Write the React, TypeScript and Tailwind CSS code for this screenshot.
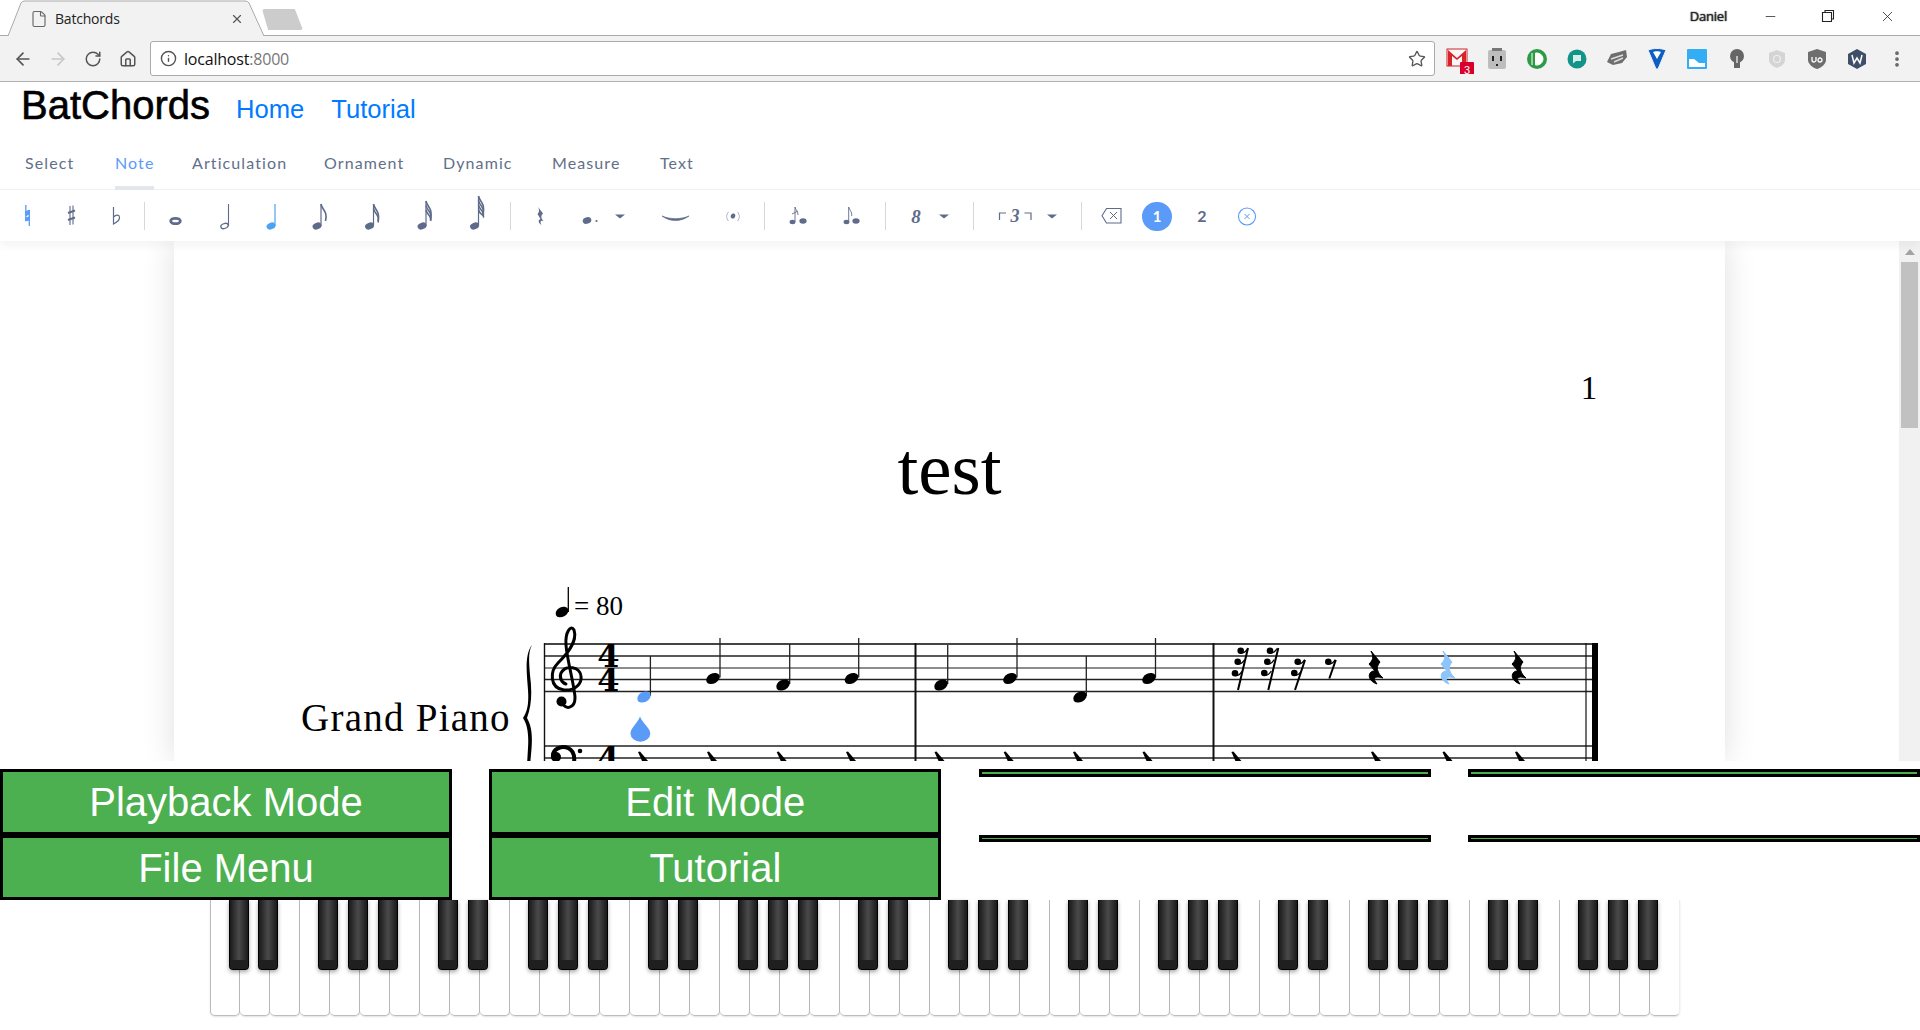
import type { ReactNode } from 'react';
import { ArrowLeft, ArrowRight, RotateCw, Home, Info, Star, X, Minus, EllipsisVertical, File } from 'lucide-react';

const INK = '#5f6b8a';
const BLUE = '#5a9bf8';

// every tool is drawn in page coordinates, the viewBox just cuts out its slot
const Tool = ({ x, w, children }: { x: number; w: number; children: ReactNode }) => (
  <svg width={w} height={51} viewBox={`${x} 190 ${w} 51`} className="shrink-0">
    {children}
  </svg>
);

const Sep = () => <div className="w-px h-[28px] bg-[#d5d8de] shrink-0" />;

const Caret = ({ cx }: { cx: number }) => <path d={`M${cx - 5} 214.5h10l-5 4z`} fill={INK} />;

const ToolNote = ({ x, top, flags = 0, color = INK }: { x: number; top: number; flags?: number; color?: string }) => (
  <g>
    <ellipse cx={x - 4} cy={226} rx={4.6} ry={3.3} transform={`rotate(-20 ${x - 4} 226)`} fill={color} />
    <line x1={x} y1={top} x2={x} y2={226} stroke={color} strokeWidth={1.2} />
    {Array.from({ length: flags }).map((_, i) => (
      <path
        key={i}
        d={`M${x} ${top + i * 4.5} C${x + 1} ${top + 6 + i * 4.5} ${x + 7} ${top + 7 + i * 4} ${x + 4.5} ${top + 17 + i * 1.5}`}
        fill="none"
        stroke={color}
        strokeWidth={1.6}
      />
    ))}
  </g>
);

const NoteTools = () => (
  <div className="flex items-center h-[51px] bg-white relative z-10 shadow-[0_4px_10px_rgba(0,0,0,0.05)]">
    <Tool x={0} w={49}>
      <path d="M25.8 205v16M29.3 210v16" stroke={BLUE} strokeWidth={1.3} />
      <path d="M25.8 211.5l3.5-1.2v4l-3.5 1.2zM25.8 218l3.5-1.2v3l-3.5 1.2z" fill={BLUE} stroke={BLUE} />
    </Tool>
    <Tool x={49} w={45}>
      <path d="M70 206v19M73 205.500v19" stroke={INK} strokeWidth={1.1} />
      <path d="M68 213l7-2.500M68 220l7-2.500" stroke={INK} strokeWidth={2} />
    </Tool>
    <Tool x={94} w={50}>
      <path d="M113.500 207v17c4-2 6.500-4 6-7-.4-2.500-3.500-2.500-6 0" fill="none" stroke={INK} strokeWidth={1.2} />
    </Tool>
    <Sep />
    <Tool x={145} w={57}>
      <ellipse cx={175.500} cy={221} rx={4.800} ry={2.700} fill="none" stroke={INK} strokeWidth={2.800} />
    </Tool>
    <Tool x={202} w={46}>
      <ellipse cx={224.500} cy={226} rx={3.800} ry={2.400} transform="rotate(-20 224.500 226)" fill="none" stroke={INK} strokeWidth={1.300} />
      <line x1={228.500} y1={204} x2={228.500} y2={226} stroke={INK} strokeWidth={1.100} />
    </Tool>
    <Tool x={248} w={46}>
      <ToolNote x={275} top={204} color="#4aa3f5" />
    </Tool>
    <Tool x={294} w={50}>
      <ToolNote x={321} top={204} flags={1} />
    </Tool>
    <Tool x={344} w={56}>
      <ToolNote x={373.500} top={204} flags={2} />
    </Tool>
    <Tool x={400} w={48}>
      <ToolNote x={426} top={201} flags={3} />
    </Tool>
    <Tool x={448} w={62}>
      <ToolNote x={478.500} top={196} flags={4} />
    </Tool>
    <Sep />
    <Tool x={511} w={58}>
      <path d="M538 207l5 6.500c-2 2-2.500 4 .5 7.500-2.500-.7-4 .5-2 4-3-1.500-4-5-1-6l-3-5c2-2 2-4 .5-7z" fill={INK} />
    </Tool>
    <Tool x={569} w={71}>
      <ellipse cx={587} cy={220.500} rx={4.400} ry={3.300} transform="rotate(-20 587 220.500)" fill={INK} />
      <circle cx={596.500} cy={221} r={1.100} fill={INK} />
      <Caret cx={620} />
    </Tool>
    <Tool x={640} w={70}>
      <path d="M662 216c8 6 19 6 27 0-8 3.500-19 3.500-27 0z" fill={INK} stroke={INK} strokeWidth={0.7} />
    </Tool>
    <Tool x={710} w={54}>
      <ellipse cx={733} cy={216} rx={2.200} ry={2.600} transform="rotate(20 733 216)" fill={INK} />
      <path d="M728.500 212c-2.500 3-2.500 6 0 9M737.500 212c2.500 3 2.500 6 0 9" fill="none" stroke="#a9b0c2" strokeWidth={1} />
    </Tool>
    <Sep />
    <Tool x={765} w={66}>
      <ellipse cx={792.500} cy={222} rx={2.900} ry={2.200} fill={INK} />
      <ellipse cx={803} cy={221} rx={3.600} ry={2.800} fill={INK} />
      <path d="M795 222v-15c.5 3 3 4 3 8M792 214l6-3" fill="none" stroke={INK} strokeWidth={0.9} />
    </Tool>
    <Tool x={831} w={54}>
      <ellipse cx={846.500} cy={222} rx={2.900} ry={2.200} fill={INK} />
      <ellipse cx={856} cy={221} rx={3.600} ry={2.800} fill={INK} />
      <path d="M848.700 222v-15c.5 3 3.500 4 3 9" fill="none" stroke={INK} strokeWidth={0.9} />
    </Tool>
    <Sep />
    <Tool x={886} w={87}>
      <text x={916} y={223} textAnchor="middle" fontFamily="Liberation Serif, serif" fontSize={19} fontWeight={700} fontStyle="italic" fill={INK}>
        8
      </text>
      <Caret cx={944} />
    </Tool>
    <Sep />
    <Tool x={974} w={107}>
      <path d="M999.500 220v-7h6.500M1031 220v-7h-6.500" fill="none" stroke={INK} strokeWidth={1.200} />
      <text x={1015} y={222} textAnchor="middle" fontFamily="Liberation Serif, serif" fontSize={18} fontWeight={700} fontStyle="italic" fill={INK}>
        3
      </text>
      <Caret cx={1052} />
    </Tool>
    <Sep />
    <Tool x={1082} w={60}>
      <path d="M1106.500 208.500h14.500v14.500h-14.500l-4.500-7.200z" fill="none" stroke={INK} strokeWidth={1.100} />
      <path d="M1110 212l7 7M1117 212l-7 7" stroke={INK} strokeWidth={1} />
    </Tool>
    <button className="w-[30px] h-[29px] mt-[2px] shrink-0 rounded-full bg-[#5a9bf8] text-white text-[15px] font-bold flex items-center justify-center font-['Lato',sans-serif]">
      1
    </button>
    <button className="w-[60px] shrink-0 text-[#5f6b8a] text-[16px] font-bold text-center font-['Lato',sans-serif]">2</button>
    <Tool x={1232} w={30}>
      <circle cx={1247} cy={216.500} r={8.500} fill="none" stroke={BLUE} strokeWidth={1.100} />
      <path d="M1244.500 214l5 5M1249.500 214l-5 5" stroke={BLUE} strokeWidth={1} />
    </Tool>
  </div>
);

const ScoreNote = ({ hx, hy, sx, top, color = '#000' }: { hx: number; hy: number; sx: number; top: number; color?: string }) => (
  <g>
    <line x1={sx} y1={top} x2={sx} y2={hy - 1} stroke="#222" strokeWidth={1.300} />
    <ellipse cx={hx} cy={hy} rx={7.200} ry={5} transform={`rotate(-28 ${hx} ${hy})`} fill={color} />
  </g>
);

const Rest = ({ x, color = '#000' }: { x: number; color?: string }) => (
  <path
    transform={`translate(${x} 0)`}
    d="M-4 651L5 662C2 666 1 669 5 675L8 678C2 676-2 677 0 681L2 684C-7 681-8 673-2 671L0 671L-6 664C-2 660-1 657-4 651Z"
    fill={color}
    stroke={color}
    strokeWidth={1}
  />
);

const SmallRest = ({ x, blobs }: { x: number; blobs: number[][] }) => (
  <g>
    <line x1={x} y1={blobs.length === 1 ? 678.500 : 690} x2={x + (blobs.length === 1 ? 6.500 : 10)} y2={blobs.length === 3 ? 648 : 660} stroke="#000" strokeWidth={2} />
    {blobs.map(([bx, by], i) => (
      <g key={i}>
        <circle cx={bx} cy={by} r={3.300} fill="#000" />
        <path d={`M${bx} ${by + 2}C${bx + 3} ${by + 3} ${bx + 5} ${by + 1} ${bx + 7} ${by - 2}`} fill="none" stroke="#000" strokeWidth={1.300} />
      </g>
    ))}
  </g>
);

const Score = () => (
  <svg width={1551} height={520} viewBox="174 241 1551 520" className="block">
    <text x={1589} y={399} textAnchor="middle" fontFamily="Liberation Serif, serif" fontSize={33} fill="#000">
      1
    </text>
    <text x={949.500} y={494} textAnchor="middle" fontFamily="Liberation Serif, serif" fontSize={75} fill="#000">
      test
    </text>
    <text x={301} y={731} fontFamily="Liberation Serif, serif" fontSize={39} letterSpacing={1.250} fill="#000">
      Grand Piano
    </text>

    {/* tempo */}
    <line x1={568.300} y1={587} x2={568.300} y2={612} stroke="#000" strokeWidth={1.300} />
    <ellipse cx={562} cy={612} rx={6.800} ry={4.800} transform="rotate(-28 562 612)" fill="#000" />
    <text x={574} y={615} fontFamily="Liberation Serif, serif" fontSize={27} fill="#000">
      = 80
    </text>

    {/* staves */}
    {[644, 656, 668, 679.500, 691.500, 746, 758].map((y, i) => (
      <line key={y} x1={544} y1={y} x2={1598} y2={y} stroke={i === 0 ? '#444' : i === 2 ? '#666' : '#222'} strokeWidth={i === 0 ? 2 : 1.300} />
    ))}
    {[544.500, 915.500, 1213.500, 1586].map((x, i) => (
      <line key={x} x1={x} y1={643} x2={x} y2={761} stroke="#111" strokeWidth={i === 0 ? 1.400 : i === 3 ? 1.200 : 2} />
    ))}
    <rect x={1592} y={643} width={6} height={118} fill="#000" />

    {/* brace */}
    <path d="M532 645C524 655 527 675 528 690C529 705 527 712 523 718C527 724 529 733 528 748L527 765L530 765C532 745 534 730 527 718C532 705 532 690 530 675C529 662 528 652 532 645Z" fill="#000" />

    {/* treble clef */}
    <path
      d="M562 702C565 711 575 708 575 698C575 688 567 660 566 645C565 632 571 624 574 630C578 642 566 655 558 663C550 671 549 688 564 690C576 691 582 683 581 676C580 667 566 664 561 673C559 678 562 683 566 684"
      fill="none"
      stroke="#000"
      strokeWidth={3}
      strokeLinecap="round"
    />
    <circle cx={561.500} cy={701.500} r={5} fill="#000" />

    {/* bass clef */}
    <circle cx={556} cy={757} r={5} fill="#000" />
    <path d="M553 757C552 749 562 745 568 748C575 751 575 760 573 768" fill="none" stroke="#000" strokeWidth={4} />
    <circle cx={580} cy={751} r={2.300} fill="#000" />

    {/* time signatures */}
    {[667, 691, 769].map((y) => (
      <text key={y} x={608.500} y={y} textAnchor="middle" fontFamily="DejaVu Serif, serif" fontWeight={700} fontSize={32} fill="#000">
        4
      </text>
    ))}

    {/* measure 1 and 2 */}
    <ScoreNote hx={644} hy={697} sx={650.400} top={656} color={BLUE} />
    <ScoreNote hx={713} hy={678.500} sx={720} top={638} />
    <ScoreNote hx={783} hy={685} sx={789.700} top={644} />
    <ScoreNote hx={851.500} hy={678.500} sx={858.700} top={638} />
    <ScoreNote hx={941} hy={685} sx={947.700} top={645} />
    <ScoreNote hx={1010} hy={678.500} sx={1017} top={638} />
    <ScoreNote hx={1080} hy={697} sx={1086.300} top={656} />
    <ScoreNote hx={1149} hy={678.500} sx={1155.500} top={638} />
    <path d="M640 716.500C637 724 630.500 728 630.500 733.500A9.900 8.200 0 0 0 650.300 733.500C650.300 728 643 724 640 716.500Z" fill={BLUE} />

    {/* measure 3 rests */}
    <SmallRest x={1238} blobs={[[1240.700, 650.700], [1237.700, 661.700], [1235, 673.300]]} />
    <SmallRest x={1268.300} blobs={[[1270, 650.700], [1267.300, 661.700], [1264.300, 673]]} />
    <SmallRest x={1295} blobs={[[1297.700, 661.700], [1294.300, 673]]} />
    <SmallRest x={1329.300} blobs={[[1328.300, 661.700]]} />
    <Rest x={1375} />
    <Rest x={1447} color="#8cc4fb" />
    <Rest x={1518} />

    {/* bass rests, the staff is cut by the panel below */}
    {[640, 709, 778.700, 848, 936.500, 1005.700, 1075, 1144.500, 1233.400, 1373, 1444.500, 1517].map((x) => (
      <path key={x} d={`M${x - 2} 752L${x} 751.500L${x + 8} 761L${x + 2} 761Z`} fill="#000" />
    ))}
  </svg>
);

const BLACK_KEYS = [0, 1, 3, 4, 5];

const Piano = () => (
  <div className="flex pl-[210px]">
    {Array.from({ length: 49 }).map((_, i) => (
      <div
        key={i}
        className="relative w-[30px] h-[116px] bg-white box-border border-r border-b border-[#bdbdbd] first:border-l last:border-r-[#eeeeee] rounded-b-[5px] shadow-[0_1px_2px_rgba(0,0,0,0.12)]"
      >
        {BLACK_KEYS.includes(i % 7) && (
          <div className="absolute z-10 left-[18px] top-0 w-5 h-[70px] box-border border border-black border-t-0 rounded-b-[4px] bg-[linear-gradient(90deg,#1a1a1a,#4a4a4a_50%,#1a1a1a)] shadow-[0_2px_4px_rgba(0,0,0,0.35)] flex flex-col justify-end overflow-hidden">
            <div className="h-[9px] bg-[#1f1f1f]" />
          </div>
        )}
      </div>
    ))}
  </div>
);

const BigButton = ({ label, h }: { label: string; h: string }) => (
  <button className={`${h} w-full box-border border-[3px] border-black bg-[#4CAF50] text-white text-[40px] font-['Liberation_Sans',sans-serif] flex items-center justify-center`}>
    {label}
  </button>
);

const Ext = ({ children }: { children: ReactNode }) => (
  <svg width={40} height={30} viewBox="-20 -15 40 30" className="shrink-0">
    {children}
  </svg>
);

const Extensions = () => (
  <div className="flex items-center pl-[3px] -ml-[1px]">
    <Ext>
      <rect x={-10} y={-10} width={20} height={17} fill="#f7f7f7" stroke="#d2252a" />
      <path d="M-9-9L0-1L9-9V7H5V-3L0 1L-5-3V7H-9Z" fill="#d9232a" />
      <rect x={3} y={3} width={14} height={14} rx={1} fill="#d8002a" />
      <text x={10} y={14.500} textAnchor="middle" fontSize={11} fill="#fff" fontFamily="Liberation Sans, sans-serif">3</text>
    </Ext>
    <Ext>
      <rect x={-9} y={-9} width={18} height={19} rx={2} fill="#bdbdbd" />
      <rect x={-5} y={-11} width={10} height={3} fill="#777" />
      <path d="M-4-3v5M4-3v5M-1 6h2" stroke="#222" strokeWidth={2} />
    </Ext>
    <Ext>
      <circle r={10} fill="#2f9a46" />
      <path d="M-5-6v12M-1.500-6h1.500a6 6 0 0 1 0 12h-1.500z" fill="#fff" stroke="#fff" />
    </Ext>
    <Ext>
      <circle r={9.500} fill="#129487" />
      <path d="M-4-4h8v6h-5l-3 2.500z" fill="#d6efec" />
    </Ext>
    <Ext>
      <path d="M-10 3L-6-5L2-7L9-9L10-2L5 4L-4 6Z" fill="#6e6e6e" />
      <path d="M-6 0L6-4M-3 3L6-1" stroke="#ddd" strokeWidth={1.500} />
    </Ext>
    <Ext>
      <path d="M-9-9C-4-11 4-11 9-9L1 10H-1Z" fill="#0f5fc0" stroke="#eaf2fb" />
      <path d="M-4-7L0 0L4-7C2-8-2-8-4-7Z" fill="#fff" />
    </Ext>
    <Ext>
      <rect x={-10} y={-10} width={20} height={20} rx={1} fill="#33aef5" />
      <path d="M-8 0H-3L2 4H8V8H-8Z" fill="#fff" />
    </Ext>
    <Ext>
      <circle cy={-3} r={7} fill="#666" />
      <rect x={-3} y={3} width={6} height={6} fill="#666" />
      <path d="M0-3v7" stroke="#ddd" strokeWidth={1.500} />
    </Ext>
    <Ext>
      <path d="M0-9L8-6V1C8 5 3 8 0 9C-3 8-8 5-8 1V-6Z" fill="#d4d4d4" />
      <circle r={3.500} fill="none" stroke="#eee" strokeWidth={1.200} />
    </Ext>
    <Ext>
      <path d="M0-10L9-7V1C9 5 4 9 0 10C-4 9-9 5-9 1V-7Z" fill="#6e6e6e" />
      <path d="M-5-2v3a2 2 0 0 0 4 0V-2M1 1a2 2 0 1 0 4 0a2 2 0 1 0-4 0" fill="none" stroke="#fff" strokeWidth={1.300} />
    </Ext>
    <Ext>
      <path d="M0-10L9-5V5L0 10L-9 5V-5Z" fill="#3f4f68" />
      <path d="M-5-4L-3 4L0-1L3 4L5-4" fill="none" stroke="#fff" strokeWidth={1.500} />
    </Ext>
    <div className="w-[40px] flex justify-center">
      <EllipsisVertical size={20} color="#666" strokeWidth={2.5} />
    </div>
  </div>
);

const Browser = () => (
  <div className="font-['Open_Sans',sans-serif]">
    <div className="flex items-start h-[36px] border-b border-[#a9a9a9] bg-white relative">
      <div className="relative w-[272px] h-[36px] shrink-0">
        <svg width={272} height={36} className="absolute inset-0">
          <path d="M8 36L21 3Q22 1 25 1H245Q248 1 249 3L264 36" fill="#f2f2f2" stroke="#a9a9a9" />
        </svg>
        <div className="relative flex items-center h-[36px] pl-[30px] pr-[30px] pt-[1px]">
          <File size={18} color="#666" strokeWidth={1.500} />
          <span className="ml-[7px] text-[14px] tracking-[-0.2px] text-[#222]">Batchords</span>
          <X size={14} color="#555" strokeWidth={2} className="ml-auto mr-[-2px]" />
        </div>
      </div>
      <div className="w-[41px] h-[21px] mt-[9px] -ml-[10px] bg-[#cccccc] rounded-[3px] [clip-path:polygon(0_0,80%_0,100%_100%,15%_100%)]" />
      <span className="ml-auto mt-[7px] mr-[36px] text-[13px] tracking-[-0.2px] text-[#222] [text-shadow:0_0_2px_#fff,0_0_1px_#000,0_0_1px_#000]">Daniel</span>
      <Minus size={15} color="#222" strokeWidth={1.200} className="mt-[9px]" />
      <svg width={14} height={14} viewBox="0 0 14 14" className="mt-[9px] ml-[43px]">
        <path d="M1.500 3.500h9v9h-9zM4 3.500V1.500h8.500v8.500h-2" fill="none" stroke="#222" strokeWidth={1.100} />
      </svg>
      <X size={17} color="#222" strokeWidth={1.100} className="mt-[8px] ml-[44px] mr-[24px]" />
    </div>
    <div className="flex items-center h-[46px] bg-[#f2f2f2] border-b border-[#b0b0b0]">
      <div className="w-[150px] flex items-center pl-[13px] shrink-0">
        <ArrowLeft size={20} color="#555" strokeWidth={2} />
        <ArrowRight size={20} color="#c8c8c8" strokeWidth={2} className="ml-[15px]" />
        <RotateCw size={18} color="#555" strokeWidth={2} className="ml-[16px]" />
        <Home size={18} color="#555" strokeWidth={2} className="ml-[17px]" />
      </div>
      <div className="flex items-center w-[1285px] h-[35px] bg-white border border-[#aaaaaa] rounded-[3px] pl-[9px] pr-[8px] shrink-0">
        <Info size={17} color="#555" strokeWidth={2} />
        <span className="ml-[7px] text-[16px] text-[#111] tracking-[-0.2px]">
          localhost<span className="text-[#777777]">:8000</span>
        </span>
        <Star size={18} color="#555" strokeWidth={1.800} className="ml-auto" />
      </div>
      <Extensions />
    </div>
  </div>
);

export default function App() {
  return (
    <div className="w-full h-screen overflow-hidden bg-white flex flex-col">
      <Browser />
      <div className="flex items-baseline h-[62px] pl-[21px] font-['Liberation_Sans',sans-serif] shrink-0">
        <h1 className="text-[40px] leading-[46px] text-black [-webkit-text-stroke:0.6px_#000]">BatChords</h1>
        <a className="ml-[26px] text-[25.6px] leading-[44px] text-[#007bff] -translate-y-px">Home</a>
        <a className="ml-[27px] text-[25.6px] leading-[44px] text-[#007bff] -translate-y-px">Tutorial</a>
      </div>
      <div className="flex gap-[38px] h-[46px] pl-[25px] border-b border-[#f2f2f2] font-['Lato',sans-serif] text-[16px] tracking-[1.1px] text-[#626f88] shrink-0">
        <div className="w-[52px] pt-[7px] whitespace-nowrap">Select</div>
        <div className="w-[39px] h-[46px] pt-[7px] box-border whitespace-nowrap text-[#5a9bf8] border-b-[4px] border-[#e4e7ed]">Note</div>
        <div className="w-[94px] pt-[7px] whitespace-nowrap">Articulation</div>
        <div className="w-[81px] pt-[7px] whitespace-nowrap">Ornament</div>
        <div className="w-[71px] pt-[7px] whitespace-nowrap">Dynamic</div>
        <div className="w-[70px] pt-[7px] whitespace-nowrap">Measure</div>
        <div className="w-[33px] pt-[7px] whitespace-nowrap">Text</div>
      </div>
      <NoteTools />
      <div className="flex h-[520px] shrink-0">
        <div className="flex-1 overflow-hidden pl-[174px]">
          <div className="w-[1551px] bg-white shadow-[0_0_30px_rgba(0,0,0,0.13)]">
            <Score />
          </div>
        </div>
        <div className="w-[21px] bg-[#f1f1f1] shrink-0 flex flex-col items-center pt-[8px]">
          <div className="w-0 h-0 border-x-[5px] border-x-transparent border-b-[6px] border-b-[#a3a3a3]" />
          <div className="mt-[7px] w-[17px] h-[166px] bg-[#c1c1c1]" />
        </div>
      </div>
      <div className="grid grid-cols-[452px_452px_452px_452px] justify-between mt-[8px] shrink-0">
        <div>
          <BigButton label="Playback Mode" h="h-[66px]" />
          <BigButton label="File Menu" h="h-[65px]" />
        </div>
        <div>
          <BigButton label="Edit Mode" h="h-[66px]" />
          <BigButton label="Tutorial" h="h-[65px]" />
        </div>
        <div>
          <BigButton label="" h="h-[8px] mb-[58px]" />
          <BigButton label="" h="h-[7px]" />
        </div>
        <div>
          <BigButton label="" h="h-[8px] mb-[58px]" />
          <BigButton label="" h="h-[7px]" />
        </div>
      </div>
      <div className="mt-0 shrink-0 h-[130px]">
        <Piano />
      </div>
    </div>
  );
}
